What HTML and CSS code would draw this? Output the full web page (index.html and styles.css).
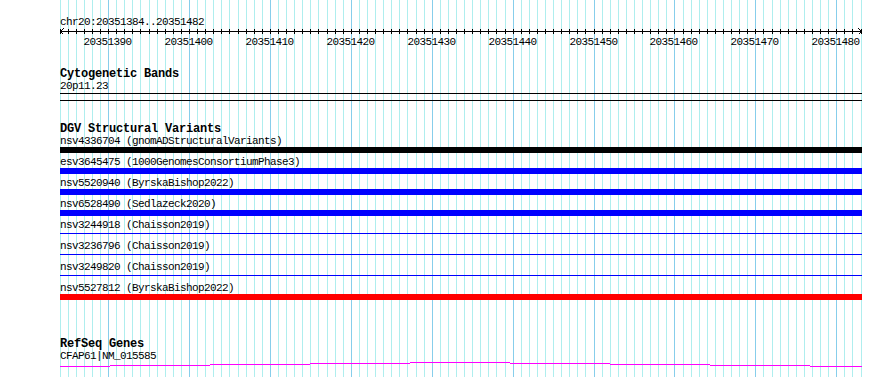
FILE: index.html
```html
<!DOCTYPE html>
<html lang="en">

<head>
    <meta charset="UTF-8">
    <meta name="viewport" content="width=device-width, initial-scale=1.0">
    <title>chr20:20351384..20351482</title>
    <link rel="stylesheet" href="styles.css">
</head>

<body>
    <div id="panel">
        <!-- vertical guide lines, one per base -->
        <svg id="grid" width="802" height="377"></svg>

        <div id="tracks">
            <div class="ruler">
                <div class="segname">chr20:20351384..20351482</div>
                <svg id="scale" width="802" height="20"></svg>
            </div>

            <div class="track cyto">
                <div class="title">Cytogenetic Bands</div>
                <div class="label">20p11.23</div>
                <div class="ideogram"></div>
            </div>

            <div class="track dgv">
                <div class="title">DGV Structural Variants</div>
                <div class="feature">
                    <div class="label">nsv4336704 (gnomADStructuralVariants)</div>
                    <div class="bar black"></div>
                </div>
                <div class="feature">
                    <div class="label">esv3645475 (1000GenomesConsortiumPhase3)</div>
                    <div class="bar blue"></div>
                </div>
                <div class="feature">
                    <div class="label">nsv5520940 (ByrskaBishop2022)</div>
                    <div class="bar blue"></div>
                </div>
                <div class="feature">
                    <div class="label">nsv6528490 (Sedlazeck2020)</div>
                    <div class="bar blue"></div>
                </div>
                <div class="feature">
                    <div class="label">nsv3244918 (Chaisson2019)</div>
                    <div class="bar line"></div>
                </div>
                <div class="feature">
                    <div class="label">nsv3236796 (Chaisson2019)</div>
                    <div class="bar line"></div>
                </div>
                <div class="feature">
                    <div class="label">nsv3249820 (Chaisson2019)</div>
                    <div class="bar line"></div>
                </div>
                <div class="feature">
                    <div class="label">nsv5527812 (ByrskaBishop2022)</div>
                    <div class="bar red"></div>
                </div>
            </div>

            <div class="track refseq">
                <div class="title">RefSeq Genes</div>
                <div class="label">CFAP61|NM_015585</div>
                <svg class="gene" width="802" height="8">
                    <path d="M0 4.5H50M50 3.5H150M150 2.5H250M250 1.5H350M350 0.5H450M450 1.5H550M550 2.5H650M650 3.5H750M750 4.5H802" />
                </svg>
            </div>
        </div>
    </div>

    <script>
        const NS = "http://www.w3.org/2000/svg";
        const start = 20351384;
        const span = 99;     // bases shown
        const width = 801;   // pixels for the span

        let grid = document.getElementById("grid");
        let scale = document.getElementById("scale");

        function add(parent, tag, attrs) {
            let node = document.createElementNS(NS, tag);
            for (let k in attrs) {
                node.setAttribute(k, attrs[k]);
            }
            parent.appendChild(node);
            return node;
        }

        // ruler line + arrow heads
        add(scale, "line", { x1: 0, x2: 802, y1: 3.5, y2: 3.5, class: "ink" });
        add(scale, "path", { d: "M3.5 0.5L0.5 3.5L3.5 6.5", class: "ink" });
        add(scale, "path", { d: "M798.5 0.5L801.5 3.5L798.5 6.5", class: "ink" });

        for (let i = 0; i <= span; i++) {
            let x = Math.floor(i * width / span) + 0.5;
            let pos = start + i;
            let major = pos % 10 == 0;

            add(grid, "line", { x1: x, x2: x, y1: 0, y2: 377, class: major ? "major" : "minor" });
            add(scale, "line", { x1: x, x2: x, y1: 1, y2: 6, class: "ink" });

            if (major) {
                let t = add(scale, "text", { x: x - 25, y: 17, class: "ticklabel" });
                t.textContent = pos;
            }
        }
    </script>
</body>

</html>
```

FILE: styles.css
```css
body {
    margin: 0;
    background: #fff;
    color: #000;
    font-family: "Liberation Mono", "DejaVu Sans Mono", monospace;
}

#panel {
    position: relative;
    width: 890px;
    height: 377px;
    overflow: hidden;
}

#grid {
    position: absolute;
    left: 60px;
    top: 0;
    shape-rendering: crispEdges;
}

#grid .minor {
    stroke: #afeeee;
    stroke-width: 1;
}

#grid .major {
    stroke: #87ceeb;
    stroke-width: 1;
}

#tracks {
    position: relative;
    margin-left: 60px;
    width: 802px;
}

.segname,
.label {
    height: 12px;
    font-size: 11px;
    line-height: 12px;
    letter-spacing: -0.6px;
    white-space: nowrap;
}

.title {
    height: 12px;
    font-size: 12px;
    font-weight: bold;
    line-height: 12px;
    letter-spacing: -0.2px;
    white-space: nowrap;
}

/* ruler */
.ruler {
    height: 48px;
}

.segname {
    padding-top: 16px;
}

#scale {
    display: block;
    shape-rendering: crispEdges;
}

#scale .ink {
    stroke: #000;
    stroke-width: 1;
    fill: none;
}

#scale .ticklabel {
    font-family: "Liberation Mono", "DejaVu Sans Mono", monospace;
    font-size: 11px;
    letter-spacing: -0.6px;
    fill: #000;
}

/* cytobands */
.cyto {
    margin-top: 20px;
}

.ideogram {
    margin-top: 1px;
    height: 6px;
    border-top: 1px solid #000;
    border-bottom: 1px solid #000;
}

/* dgv */
.dgv {
    margin-top: 22px;
}

.feature {
    padding-bottom: 3px;
}

.bar {
    height: 6px;
}

.bar.black {
    background: #000;
}

.bar.blue {
    background: #00f;
}

.bar.red {
    background: #f00;
}

.bar.line {
    height: 1px;
    margin: 2px 0 3px;
    background: #00f;
}

/* refseq */
.refseq {
    margin-top: 35px;
}

.gene {
    display: block;
    shape-rendering: crispEdges;
}

.gene path {
    stroke: #f0f;
    stroke-width: 1;
    fill: none;
}
```
